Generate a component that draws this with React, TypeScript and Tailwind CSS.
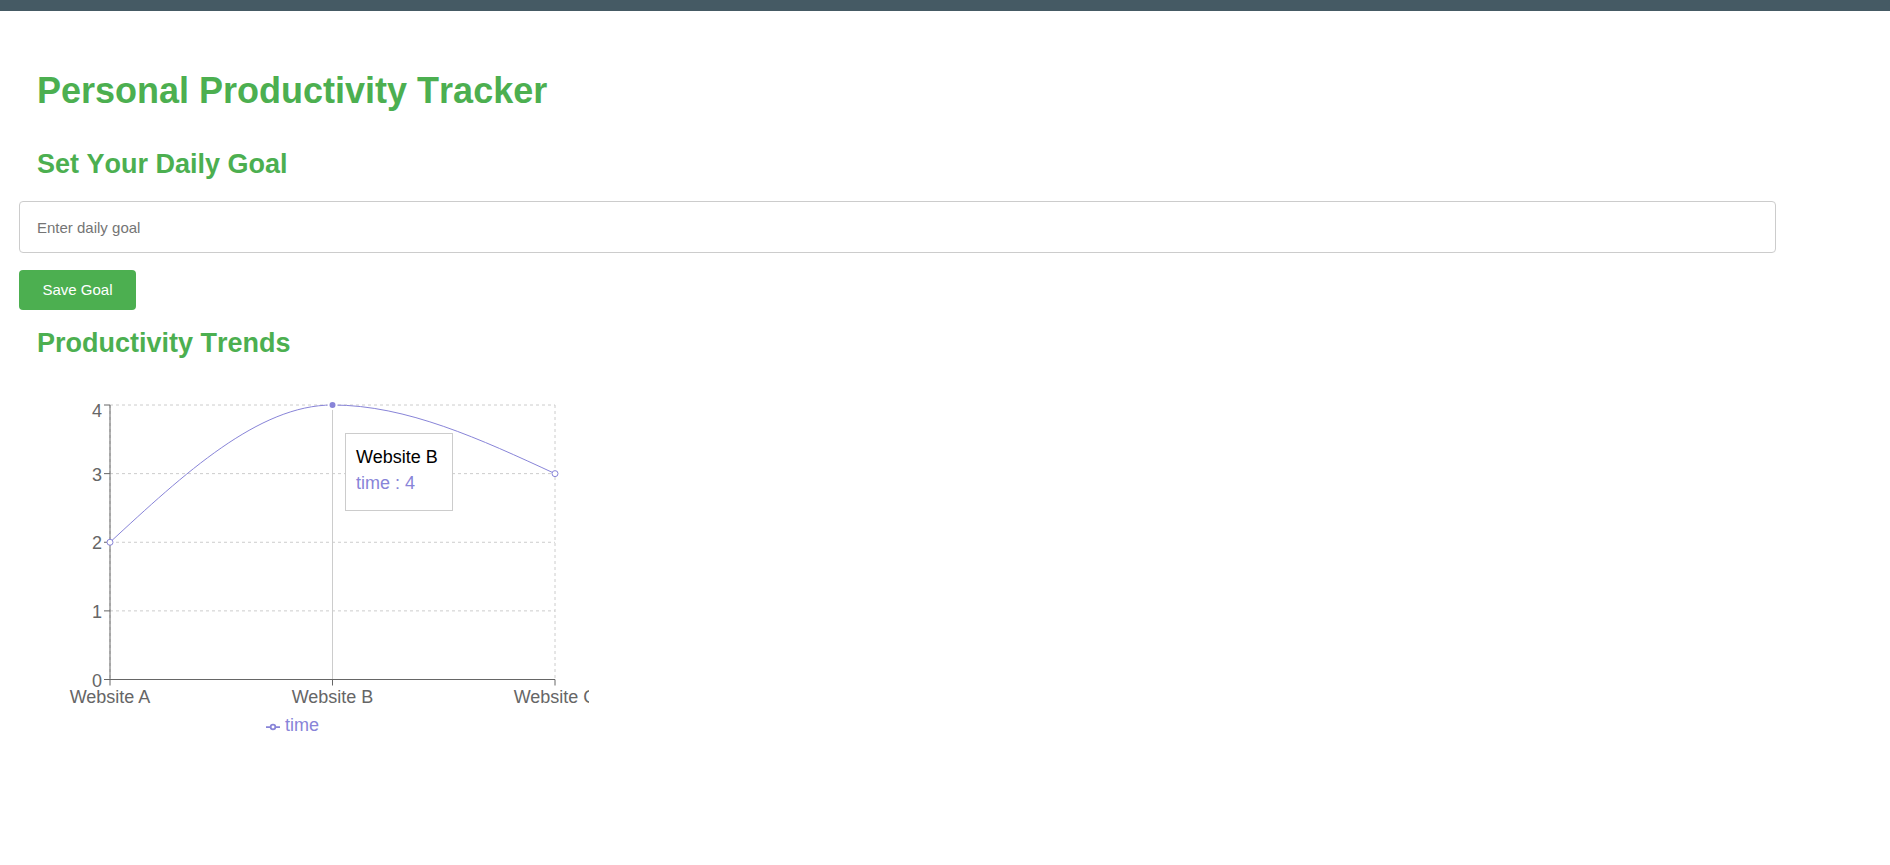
import React from "react";

const PURPLE = "#8884d8";

function Chart() {
  const ox = 19;
  const oy = 385;
  const xA = 110,
    xB = 332.5,
    xC = 555;
  const yTop = 405,
    yBot = 679.5;
  const unit = (yBot - yTop) / 4;
  const yv = (v: number) => yBot - v * unit;
  const yA = yv(2),
    yB = yv(4),
    yC = yv(3);
  const h = (xB - xA) / 3;
  const s0 = (yB - yA) / (xB - xA);
  const s1 = (yC - yB) / (xC - xB);
  const t0 = (3 * s0) / 2;
  const t2 = (3 * s1) / 2;
  const d = `M${xA},${yA}C${xA + h},${yA + h * t0},${xB - h},${yB},${xB},${yB}C${xB + h},${yB},${xC - h},${yC - h * t2},${xC},${yC}`;
  const ticks = [0, 1, 2, 3, 4];
  return (
    <div className="relative mt-[26px] h-[365px] w-[570px]">
      <svg width={570} height={365} className="block overflow-hidden">
        <g transform={`translate(${-ox},${-oy})`} fontFamily="'Liberation Sans', Arial, sans-serif" fontSize={18}>
          {ticks.map((t) => (
            <line key={"h" + t} x1={xA} x2={xC} y1={yv(t)} y2={yv(t)} stroke="#ccc" strokeDasharray="3 3" />
          ))}
          {[xA, xB, xC].map((x) => (
            <line key={"v" + x} x1={x} x2={x} y1={yTop} y2={yBot} stroke="#ccc" strokeDasharray="3 3" />
          ))}
          <line x1={xB} x2={xB} y1={yTop} y2={yBot} stroke="#ccc" strokeWidth={1} />
          <line x1={xA} x2={xA} y1={yTop} y2={yBot} stroke="#666" />
          {ticks.map((t) => (
            <g key={"yt" + t}>
              <line x1={xA - 6} x2={xA} y1={yv(t)} y2={yv(t)} stroke="#666" />
              <text x={102} y={t === 4 ? 417 : yv(t) + 7} textAnchor="end" fill="#666">
                {t}
              </text>
            </g>
          ))}
          <line x1={xA} x2={xC} y1={yBot} y2={yBot} stroke="#666" />
          {[
            [xA, "Website A"],
            [xB, "Website B"],
            [xC, "Website C"],
          ].map(([x, label]) => (
            <g key={label as string}>
              <line x1={x as number} x2={x as number} y1={yBot} y2={yBot + 6} stroke="#666" />
              <text x={x as number} y={703} textAnchor="middle" fill="#666">
                {label}
              </text>
            </g>
          ))}
          <path d={d} fill="none" stroke={PURPLE} strokeWidth={1} />
          <circle cx={xA} cy={yA} r={3} fill="#fff" stroke={PURPLE} />
          <circle cx={xC} cy={yC} r={3} fill="#fff" stroke={PURPLE} />
          <circle cx={xB} cy={yB} r={4} fill={PURPLE} stroke="#fff" strokeWidth={2} />
          <g transform={`translate(266,720) scale(${14 / 32})`}>
            <path
              d="M0,16h10.666666666666666 A5.333333333333333,5.333333333333333,0,1,1,21.333333333333332,16 H32M21.333333333333332,16 A5.333333333333333,5.333333333333333,0,1,1,10.666666666666668,16"
              fill="none"
              stroke={PURPLE}
              strokeWidth={4}
            />
          </g>
          <text x={285} y={731} fill={PURPLE}>
            time
          </text>
        </g>
      </svg>
      <div className="absolute left-[326px] top-[48px] box-border h-[78px] w-[108px] border border-[#ccc] bg-white pl-[10px] pt-[11px] text-[18px] whitespace-nowrap">
        <div className="leading-[24px] text-black">Website B</div>
        <div className="mt-[2px] leading-[24px] text-[#8884d8]">time : 4</div>
      </div>
    </div>
  );
}

export default function App() {
  return (
    <div className="min-h-[865px] bg-white font-['Liberation_Sans',Arial,sans-serif] text-[18px]">
      <div className="h-[11px] bg-[#455a64]" />
      <div className="pl-[19px]">
        <h1 className="mt-[59px] pl-[18px] text-[36px] font-bold leading-[41px] text-[#4caf50] [font-kerning:none]">
          Personal Productivity Tracker
        </h1>
        <h2 className="mt-[38px] pl-[18px] text-[27px] font-bold leading-[31px] text-[#4caf50] [font-kerning:none]">
          Set Your Daily Goal
        </h2>
        <input
          type="text"
          placeholder="Enter daily goal"
          className="mt-[21px] box-border block h-[52px] w-[1757px] rounded-[4px] border border-[#ccc] bg-white px-[17px] text-[15px] text-black outline-none placeholder:text-[#757575]"
        />
        <button className="mt-[17px] block h-[40px] w-[117px] rounded-[4px] bg-[#4caf50] text-[15px] text-white">
          Save Goal
        </button>
        <h2 className="mt-[18px] pl-[18px] text-[27px] font-bold leading-[31px] text-[#4caf50] [font-kerning:none]">
          Productivity Trends
        </h2>
        <Chart />
      </div>
    </div>
  );
}
